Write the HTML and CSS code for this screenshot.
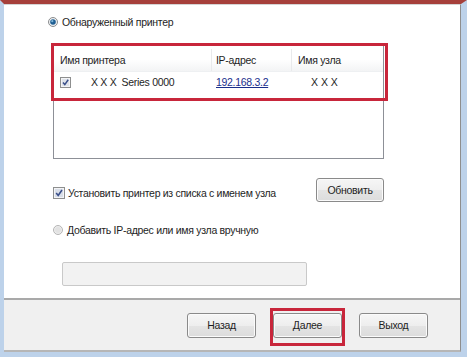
FILE: index.html
```html
<!DOCTYPE html>
<html lang="ru">
<head>
<meta charset="utf-8">
<title>Обнаруженный принтер</title>
<link rel="stylesheet" href="styles.css">
</head>
<body>
<div class="window">
  <div class="inner">
    <main class="content">
      <label class="opt opt-first">
        <svg class="radio" width="10" height="10" viewBox="0 0 10 10"><circle cx="5" cy="5" r="4.5" fill="#eef0f2" stroke="#8a8c8e"/><circle cx="5" cy="5" r="2.8" fill="#1f5f93"/><circle cx="4.3" cy="4.2" r="1.1" fill="#7fb6d8"/></svg>
        <span>Обнаруженный принтер</span>
      </label>

      <div class="list">
        <div class="list-head">
          <div class="c1">Имя принтера</div>
          <div class="c2">IP-адрес</div>
          <div class="c3">Имя узла</div>
        </div>
        <div class="list-row">
          <div class="c1">
            <svg class="cb-small" width="11" height="11" viewBox="0 0 11 11"><rect x="0.5" y="0.5" width="10" height="10" fill="#f3f4f6" stroke="#8e8f8f"/><rect x="2" y="2" width="7" height="7" fill="#dfe3ea"/><path d="M3 5.5 L4.8 7.6 L8.2 2.8" stroke="#3a4f8a" stroke-width="1.5" fill="none"/></svg>
            <span class="pname">X X X&nbsp; Series 0000</span>
          </div>
          <div class="c2"><span class="link">192.168.3.2</span></div>
          <div class="c3 host">X X X</div>
        </div>
        <div class="mark mark-list"></div>
      </div>

      <div class="opt-row">
        <label class="opt opt-check">
          <svg class="cb" width="12" height="12" viewBox="0 0 12 12"><rect x="0.5" y="0.5" width="11" height="11" fill="#f3f4f6" stroke="#8e8f8f"/><rect x="2" y="2" width="8" height="8" fill="#d9dee8"/><path d="M3.2 6 L5.2 8.4 L9 3" stroke="#3a4f8a" stroke-width="1.6" fill="none"/></svg>
          <span>Установить принтер из списка с именем узла</span>
        </label>
        <button class="btn btn-refresh" type="button">Обновить</button>
      </div>

      <label class="opt opt-manual">
        <svg class="radio" width="10" height="10" viewBox="0 0 10 10"><circle cx="5" cy="5" r="4.5" fill="#eeeeee" stroke="#b4b4b4"/><circle cx="5" cy="5" r="3" fill="#e2e2e2"/></svg>
        <span>Добавить IP-адрес или имя узла вручную</span>
      </label>

      <div class="field"></div>
    </main>

    <footer class="footer">
      <button class="btn" type="button">Назад</button>
      <span class="btn-wrap">
        <button class="btn" type="button">Далее</button>
        <span class="mark mark-btn"></span>
      </span>
      <button class="btn" type="button">Выход</button>
    </footer>
  </div>
</div>
</body>
</html>
```

FILE: styles.css
```css
* { box-sizing: border-box; }

html, body {
  margin: 0;
  padding: 0;
  background: #bdd2ea;
}

body {
  font-family: "Liberation Sans", Arial, sans-serif;
  font-size: 10.5px;
  letter-spacing: -0.3px;
  color: #1e1e1e;
}

.window {
  width: 467px;
  height: 357px;
  border-top: 4px solid #a6403b;
  border-left: 4px solid #bdd2ea;
  border-right: 6px solid #bdd2ea;
  border-bottom: 5px solid #bdd2ea;
  background: #bdd2ea;
}

.inner {
  height: 100%;
  display: flex;
  flex-direction: column;
  border-top: 1px solid #d4d4d4;
  border-right: 1px solid #8e8e8e;
  border-bottom: 2px solid #b6b6b6;
  background: #ffffff;
}

.content {
  height: 293px;
  background: #ffffff;
  display: flex;
  flex-direction: column;
  align-items: flex-start;
}

.opt {
  display: flex;
  align-items: center;
  height: 14px;
  white-space: nowrap;
}

.opt-first {
  margin: 10px 0 0 44px;
  gap: 4px;
}

.list {
  position: relative;
  margin: 15px 0 0 49px;
  width: 331px;
  height: 115px;
  border: 1px solid #8d9097;
  background: #ffffff;
}

.list-head {
  height: 27px;
  padding-top: 4px;
  display: flex;
  align-items: center;
  background: linear-gradient(#ffffff 0%, #ffffff 55%, #f3f4f5 100%);
  border-bottom: 1px solid #eef0f2;
}

.list-head .c1,
.list-head .c2 {
  border-right: 1px solid #e9eaec;
}

.list-head > div {
  height: 100%;
  display: flex;
  align-items: center;
}

.c1 { width: 158px; padding-left: 6px; display: flex; align-items: center; }
.c2 { width: 80px; padding-left: 4px; }
.c3 { flex: 1; padding-left: 6px; }

.list-row {
  height: 20px;
  display: flex;
  align-items: center;
}

.cb-small { flex: none; }

.pname {
  margin-left: 20px;
}

.link {
  color: #1a2f8c;
  text-decoration: underline;
}

.host {
  padding-left: 19px;
  letter-spacing: 0;
}

.mark {
  position: absolute;
  border: 3px solid #c8263b;
  pointer-events: none;
}

.mark-list {
  top: -2px;
  left: -3px;
  width: 337px;
  height: 58px;
}

.opt-row {
  margin: 19px 0 0 49px;
  width: 331px;
  display: flex;
  justify-content: space-between;
  align-items: center;
}

.opt-check {
  gap: 3px;
  margin-top: 5px;
}

.opt-manual {
  margin: 21px 0 0 49px;
  gap: 4px;
}

.field {
  margin: 25px 0 0 58px;
  width: 245px;
  height: 24px;
  border: 1px solid #c9c9c9;
  border-radius: 2px;
  background: #f2f2f2;
}

.btn {
  font-family: "Liberation Sans", Arial, sans-serif;
  font-size: 10.5px;
  letter-spacing: -0.3px;
  color: #1e1e1e;
  height: 25px;
  width: 69px;
  padding: 0;
  border: 1px solid #8a8a8a;
  border-radius: 3px;
  background: linear-gradient(#f6f6f6 0%, #eeeeee 50%, #e4e4e4 51%, #dcdcdc 100%);
  box-shadow: inset 0 0 0 1px #fbfbfb;
}

.btn-refresh {
  width: 68px;
  height: 24px;
}

.footer {
  height: 52px;
  border-top: 2px solid #a9a9a9;
  background: #f0f0f0;
  display: flex;
  align-items: center;
  justify-content: flex-end;
  gap: 17px;
  padding-right: 32px;
}

.btn-wrap {
  position: relative;
  display: flex;
}

.mark-btn {
  top: -5px;
  bottom: -8px;
  left: -3px;
  right: -3px;
}
```
